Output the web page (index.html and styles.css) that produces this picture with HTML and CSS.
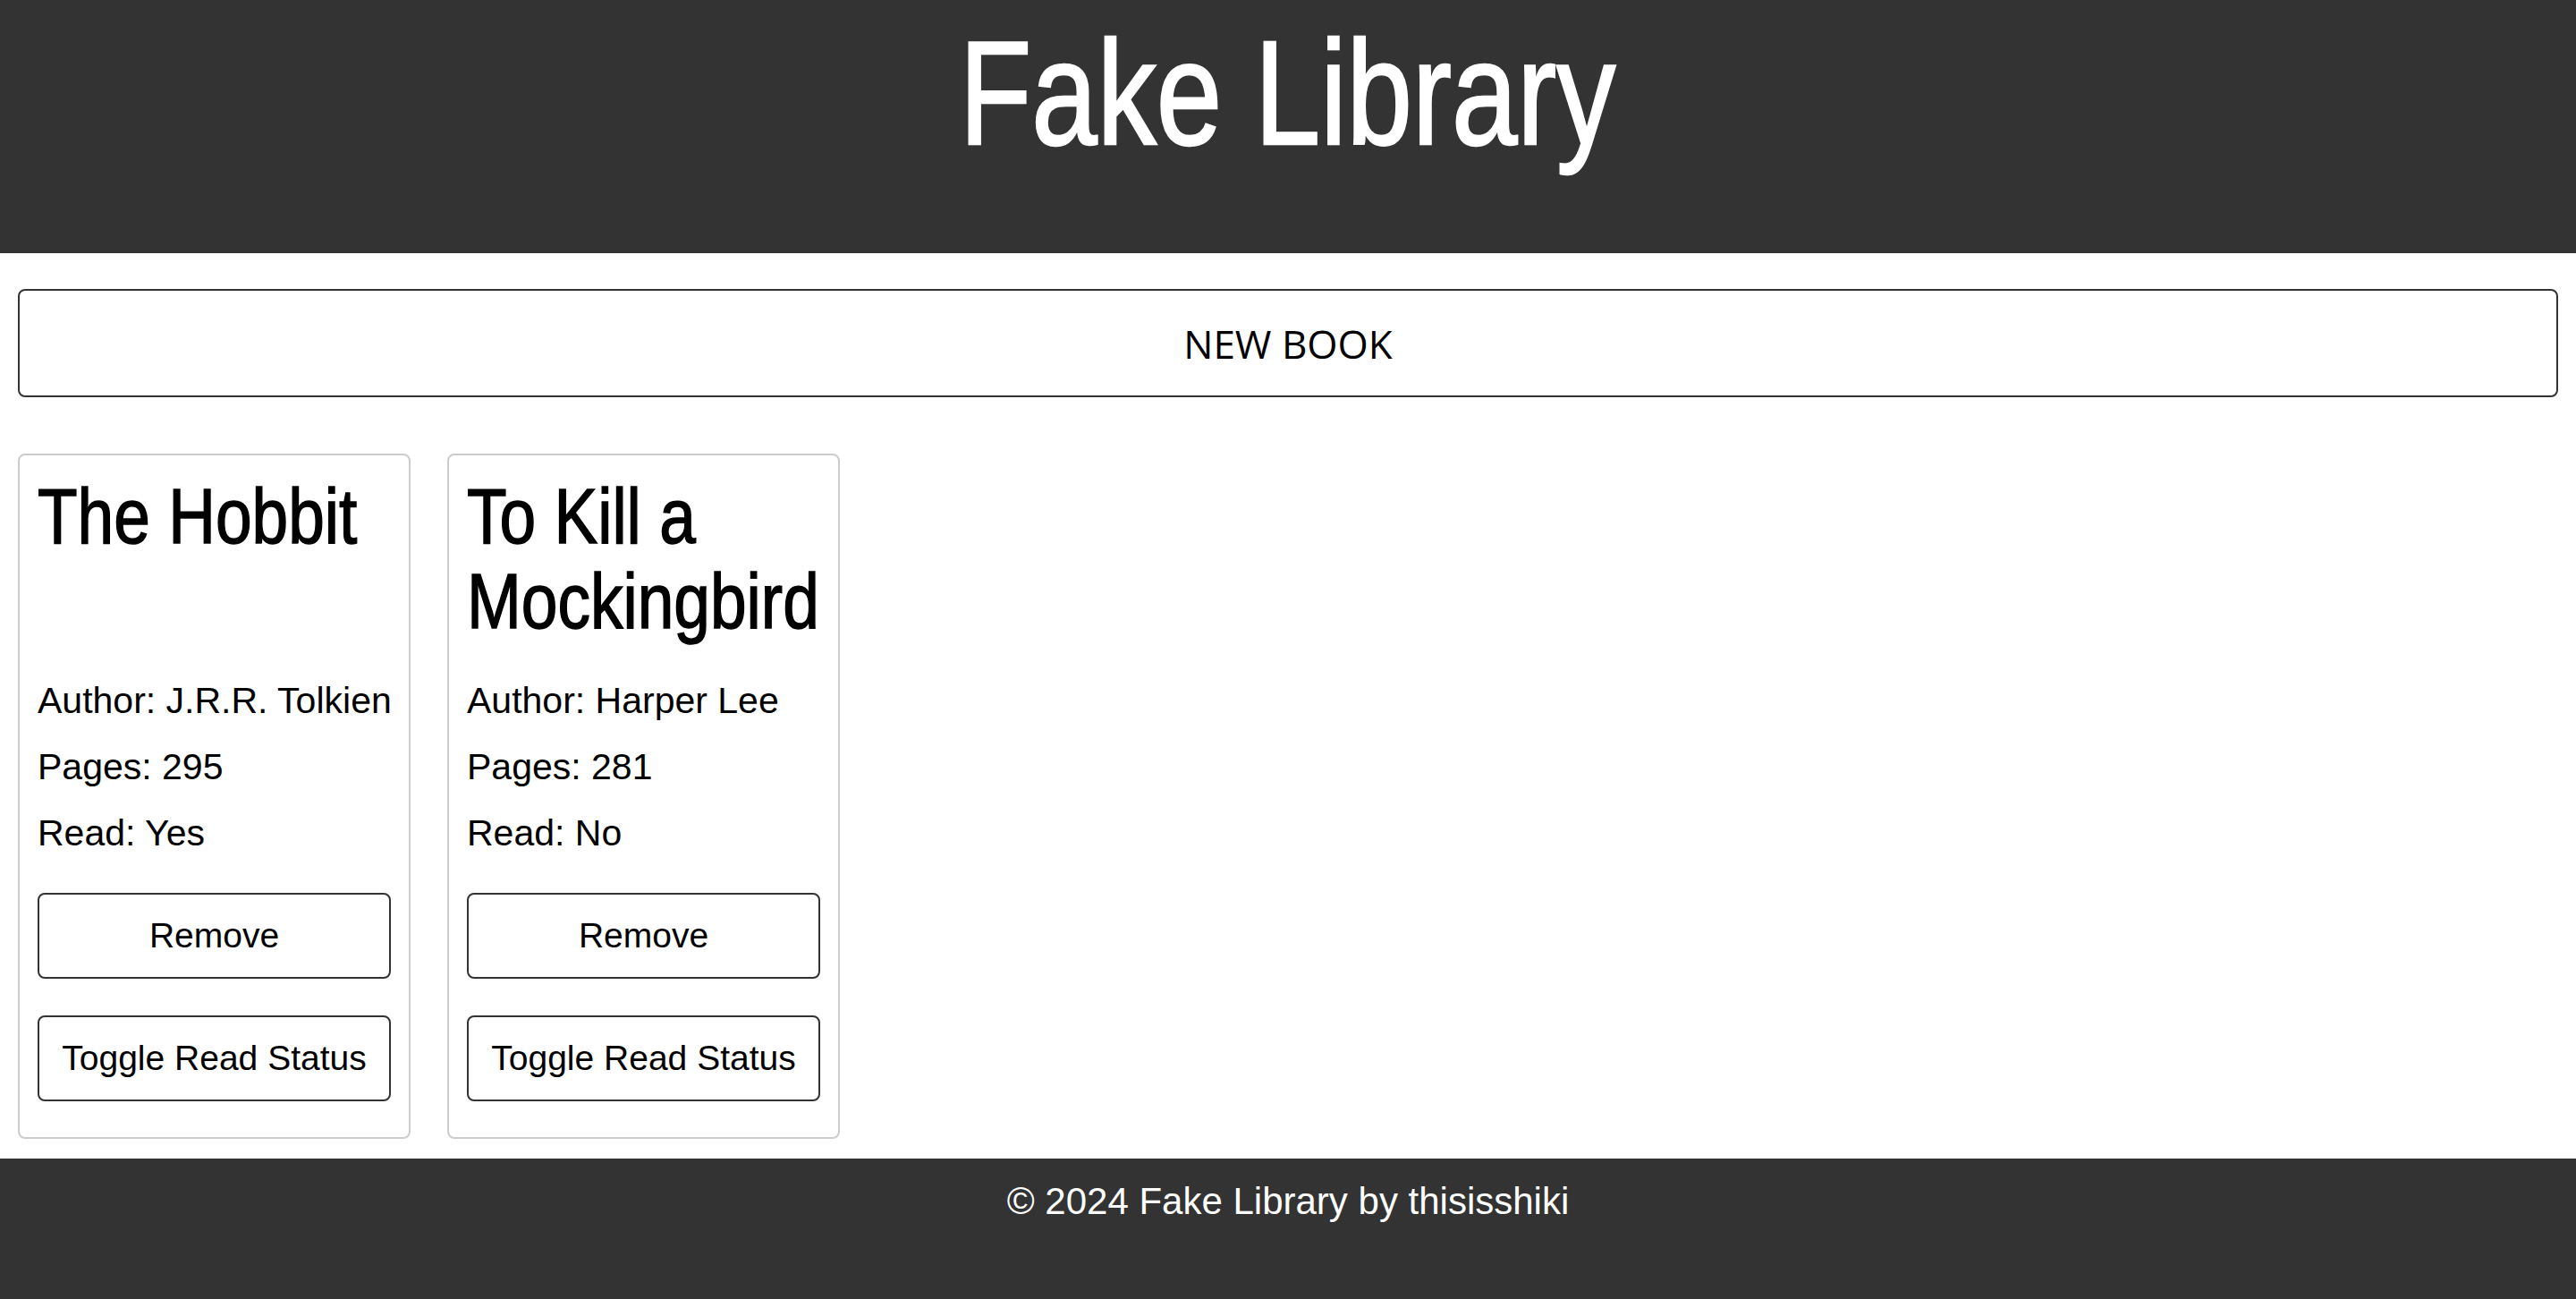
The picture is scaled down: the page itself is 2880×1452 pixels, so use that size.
FILE: index.html
```html
<!DOCTYPE html>
<html lang="en">
<head>
<meta charset="utf-8">
<title>Fake Library</title>
<link rel="stylesheet" href="styles.css">
</head>
<body>
<header class="site-header">
  <h1 class="site-title">Fake Library</h1>
</header>
<main class="main">
  <button class="new-book">NEW BOOK</button>
  <section class="library">
    <article class="card">
      <div class="card-head"><h2 class="card-title">The Hobbit</h2></div>
      <p class="card-line">Author: J.R.R. Tolkien</p>
      <p class="card-line">Pages: 295</p>
      <p class="card-line">Read: Yes</p>
      <button class="card-btn remove">Remove</button>
      <button class="card-btn toggle">Toggle Read Status</button>
    </article>
    <article class="card">
      <div class="card-head"><h2 class="card-title">To Kill a Mockingbird</h2></div>
      <p class="card-line">Author: Harper Lee</p>
      <p class="card-line">Pages: 281</p>
      <p class="card-line">Read: No</p>
      <button class="card-btn remove">Remove</button>
      <button class="card-btn toggle">Toggle Read Status</button>
    </article>
  </section>
</main>
<footer class="site-footer">
  <p class="footer-text">© 2024 Fake Library by thisisshiki</p>
</footer>
</body>
</html>
```
FILE: styles.css
```css
* { box-sizing: border-box; }

html, body {
  margin: 0;
  padding: 0;
  background: #ffffff;
  color: #000000;
  font-family: "Liberation Sans", Arial, sans-serif;
}

.site-header {
  background: #333333;
  height: 283px;
  padding-top: 22px;
  text-align: center;
}

.site-title {
  display: inline-block;
  margin: 0;
  color: #ffffff;
  font-family: "Liberation Sans", Arial, sans-serif;
  font-weight: 400;
  font-size: 165px;
  line-height: 165px;
  -webkit-text-stroke: 2.5px #ffffff;
  transform: scaleX(0.8);
}

.main {
  padding: 40px 20px 22px;
}

.new-book {
  display: flex;
  align-items: center;
  justify-content: center;
  width: 100%;
  height: 121px;
  background: #ffffff;
  border: 2px solid #333333;
  border-radius: 8px;
  font-family: "Open Sans", "Liberation Sans", sans-serif;
  font-size: 44px;
  color: #000000;
  padding: 0;
}

.library {
  margin-top: 63px;
  display: grid;
  grid-template-columns: repeat(auto-fill, 439px);
  gap: 41px;
}

.card {
  display: flex;
  flex-direction: column;
  border: 2px solid #cccccc;
  border-radius: 8px;
  padding: 20px 20px 40px;
}

.card-head {
  flex: 1;
  min-height: 190px;
  margin-bottom: 27px;
}

.card-title {
  width: 490px;
  margin: 0;
  font-family: "Liberation Sans", Arial, sans-serif;
  font-weight: 400;
  font-size: 88px;
  line-height: 95px;
  -webkit-text-stroke: 1.5px #000000;
  transform: scaleX(0.83);
  transform-origin: left top;
}

.card-line {
  margin: 0;
  font-size: 41px;
  line-height: 74px;
  white-space: nowrap;
}

.card-btn {
  display: flex;
  align-items: center;
  justify-content: center;
  width: 100%;
  height: 96px;
  background: #ffffff;
  border: 2px solid #333333;
  border-radius: 8px;
  font-family: "Liberation Sans", Arial, sans-serif;
  font-size: 39px;
  color: #000000;
  padding: 0;
}

.remove { margin-top: 30px; }
.toggle { margin-top: 41px; }

.site-footer {
  background: #333333;
  height: 157px;
  padding-top: 24px;
  text-align: center;
}

.footer-text {
  margin: 0;
  color: #ffffff;
  font-size: 42px;
  line-height: 48px;
}
```
